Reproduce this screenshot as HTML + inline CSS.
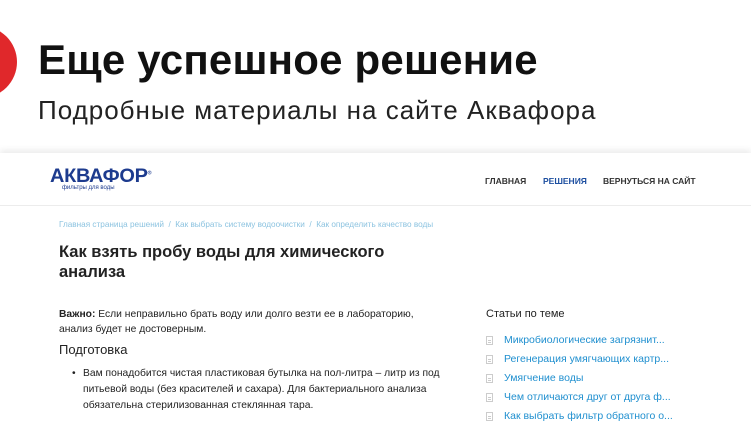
<!DOCTYPE html>
<html><head><meta charset="utf-8"><style>
*{margin:0;padding:0;box-sizing:border-box}
body{width:751px;height:422px;overflow:hidden;background:#fff;font-family:"Liberation Sans",sans-serif;position:relative}
.a{position:absolute;white-space:nowrap}
.circ{position:absolute;left:-55px;top:26px;width:72px;height:72px;border-radius:50%;background:#e0282b}
.t1{left:38px;top:36px;font-size:42px;font-weight:bold;color:#111;letter-spacing:0.2px}
.t2{left:38px;top:95px;font-size:26px;color:#222;letter-spacing:1.0px}
.shot{position:absolute;left:0;top:153px;width:751px;height:269px;background:#fff;box-shadow:0 -3px 6px rgba(0,0,0,0.08)}
.hline{position:absolute;left:0;top:205px;width:751px;height:1px;background:#ececec}
.logo{left:50px;top:166px;font-size:19px;font-weight:bold;color:#1d3b8e;letter-spacing:-0.3px;transform:scaleX(1.05);transform-origin:left}
.logo2{left:62px;top:185px;font-size:6px;color:#1d3b8e}
.nav{top:176px;font-size:8.5px;font-weight:bold;letter-spacing:0px;color:#333}
.bc{left:59px;top:220px;font-size:8.2px;color:#8cc3e0}
.h{left:59px;font-size:16.5px;font-weight:bold;color:#222}
.p{font-size:10.3px;color:#222}
.l{left:504px;font-size:10.5px;color:#1f8fcf}
.ic{position:absolute;left:486px;width:7px;height:9px;border:1px solid #ccc;background:linear-gradient(#ccc,#ccc) 1px 3px/3px 1px no-repeat,linear-gradient(#ccc,#ccc) 1px 5px/3px 1px no-repeat}
</style></head><body>
<div class="circ"></div>
<div class="a t1">Еще успешное решение</div>
<div class="a t2">Подробные материалы на сайте Аквафора</div>
<div class="shot"></div>
<div class="hline"></div>
<div class="a logo">АКВАФОР<sup style="font-size:5px">®</sup></div>
<div class="a logo2">фильтры для воды</div>
<div class="a nav" style="left:485px">ГЛАВНАЯ</div>
<div class="a nav" style="left:543px;color:#1d4fa0">РЕШЕНИЯ</div>
<div class="a nav" style="left:603px">ВЕРНУТЬСЯ НА САЙТ</div>
<div class="a bc">Главная страница решений &nbsp;/&nbsp; Как выбрать систему водоочистки &nbsp;/&nbsp; Как определить качество воды</div>
<div class="a h" style="top:243px">Как взять пробу воды для химического</div>
<div class="a h" style="top:263px">анализа</div>
<div class="a p" style="left:59px;top:309px"><b>Важно:</b> Если неправильно брать воду или долго везти ее в лабораторию,</div>
<div class="a p" style="left:59px;top:324px">анализ будет не достоверным.</div>
<div class="a" style="left:59px;top:342px;font-size:13px;color:#222">Подготовка</div>
<div class="a p" style="left:72px;top:368px">•</div>
<div class="a p" style="left:83px;top:368px">Вам понадобится чистая пластиковая бутылка на пол-литра – литр из под</div>
<div class="a p" style="left:83px;top:384px">питьевой воды (без красителей и сахара). Для бактериального анализа</div>
<div class="a p" style="left:83px;top:400px">обязательна стерилизованная стеклянная тара.</div>
<div class="a" style="left:486px;top:308px;font-size:11px;color:#222">Статьи по теме</div>
<div class="ic" style="top:336px"></div><div class="a l" style="top:334px">Микробиологические загрязнит...</div>
<div class="ic" style="top:355px"></div><div class="a l" style="top:353px">Регенерация умягчающих картр...</div>
<div class="ic" style="top:374px"></div><div class="a l" style="top:372px">Умягчение воды</div>
<div class="ic" style="top:393px"></div><div class="a l" style="top:391px">Чем отличаются друг от друга ф...</div>
<div class="ic" style="top:412px"></div><div class="a l" style="top:410px">Как выбрать фильтр обратного о...</div>
</body></html>
